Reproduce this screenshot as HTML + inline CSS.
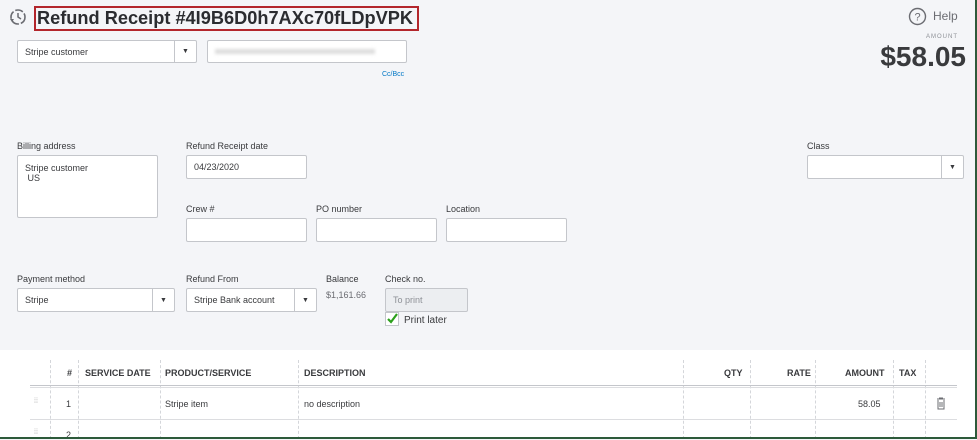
<!DOCTYPE html>
<html><head><meta charset="utf-8"><style>
*{box-sizing:border-box;margin:0;padding:0}
body{width:977px;height:439px;overflow:hidden;background:#f4f5f8;font-family:"Liberation Sans",sans-serif;color:#393a3d;position:relative}
.a{position:absolute}
.lbl{position:absolute;font-size:9px;color:#393a3d}
.box{position:absolute;background:#fff;border:1px solid #c4c6cb;border-radius:2px;font-size:9px;color:#393a3d;padding-left:7px;display:flex;align-items:center}
.dd{position:absolute;right:0;top:0;bottom:0;width:22px;border-left:1px solid #c4c6cb;display:flex;align-items:center;justify-content:center;font-size:7px}
.th{position:absolute;top:368px;font-size:9px;font-weight:bold;color:#393a3d}
.vl{position:absolute;top:360px;height:79px;border-left:1px dashed #d4d6da}
</style></head><body>
<svg class="a" style="left:8px;top:7px" width="20" height="20" viewBox="0 0 20 20"><circle cx="10" cy="10" r="7" fill="none" stroke="#6b6c72" stroke-width="1.6" stroke-dasharray="8 2"/><path d="M10 6v4l3 2" stroke="#6b6c72" stroke-width="1.5" fill="none"/><path d="M2 12l2 3 2-3" fill="#6b6c72"/></svg>
<div class="a" style="left:34px;top:6px;width:385px;height:25px;border:2px solid #b3262c;background:#f4f5f8"></div>
<div class="a" style="left:37px;top:7px;font-size:18.2px;font-weight:bold;color:#2b2c30;line-height:22px;white-space:nowrap">Refund Receipt #4I9B6D0h7AXc70fLDpVPK</div>
<svg class="a" style="left:908px;top:7px" width="19" height="19"><circle cx="9.5" cy="9.5" r="8" fill="none" stroke="#6b6c72" stroke-width="1.4"/><text x="9.5" y="13.5" text-anchor="middle" font-size="11" fill="#6b6c72" font-family="Liberation Sans">?</text></svg>
<div class="a" style="left:933px;top:9px;font-size:12px;color:#6b6c72">Help</div>
<div class="a" style="left:926px;top:34px;font-size:6px;color:#8d9096;letter-spacing:1px">AMOUNT</div>
<div class="a" style="right:11px;top:41px;font-size:28px;font-weight:bold;color:#393a3d">$58.05</div>
<div class="box" style="left:17px;top:40px;width:180px;height:23px">Stripe customer<div class="dd">▼</div></div>
<div class="box" style="left:207px;top:40px;width:200px;height:23px"><div style="width:160px;height:5px;background:#ddd;filter:blur(1.5px)"></div></div>
<div class="a" style="left:382px;top:71px;font-size:7px;color:#0077c5">Cc/Bcc</div>
<div class="lbl" style="left:17px;top:141px">Billing address</div>
<div class="box" style="left:17px;top:155px;width:141px;height:63px;align-items:flex-start;padding-top:7px;line-height:10px">Stripe customer<br>&nbsp;US</div>
<div class="lbl" style="left:186px;top:141px">Refund Receipt date</div>
<div class="box" style="left:186px;top:155px;width:121px;height:24px">04/23/2020</div>
<div class="lbl" style="left:186px;top:204px">Crew #</div>
<div class="box" style="left:186px;top:218px;width:121px;height:24px"></div>
<div class="lbl" style="left:316px;top:204px">PO number</div>
<div class="box" style="left:316px;top:218px;width:121px;height:24px"></div>
<div class="lbl" style="left:446px;top:204px">Location</div>
<div class="box" style="left:446px;top:218px;width:121px;height:24px"></div>
<div class="lbl" style="left:807px;top:141px">Class</div>
<div class="box" style="left:807px;top:155px;width:157px;height:24px"><div class="dd">▼</div></div>
<div class="lbl" style="left:17px;top:274px">Payment method</div>
<div class="box" style="left:17px;top:288px;width:158px;height:24px">Stripe<div class="dd">▼</div></div>
<div class="lbl" style="left:186px;top:274px">Refund From</div>
<div class="box" style="left:186px;top:288px;width:131px;height:24px">Stripe Bank account<div class="dd">▼</div></div>
<div class="lbl" style="left:326px;top:274px">Balance</div>
<div class="lbl" style="left:326px;top:290px;color:#6b6c72">$1,161.66</div>
<div class="lbl" style="left:385px;top:274px">Check no.</div>
<div class="box" style="left:385px;top:288px;width:83px;height:24px;background:#eceef1;color:#8d9096">To print</div>
<div class="a" style="left:385px;top:312px;width:14px;height:14px;background:#fff;border:1px solid #c4c6cb"></div>
<svg class="a" style="left:386px;top:312px" width="13" height="13"><path d="M2 7l3 3 6-8" stroke="#2ca01c" stroke-width="2.2" fill="none"/></svg>
<div class="lbl" style="left:404px;top:315px;font-size:10px">Print later</div>
<div class="a" style="left:0;top:350px;width:975px;height:89px;background:#fff"></div>
<div class="vl" style="left:50px"></div><div class="vl" style="left:78px"></div><div class="vl" style="left:160px"></div><div class="vl" style="left:298px"></div><div class="vl" style="left:683px"></div><div class="vl" style="left:750px"></div><div class="vl" style="left:815px"></div><div class="vl" style="left:893px"></div><div class="vl" style="left:925px"></div>
<div class="th" style="left:67px">#</div>
<div class="th" style="left:85px">SERVICE DATE</div>
<div class="th" style="left:165px">PRODUCT/SERVICE</div>
<div class="th" style="left:304px">DESCRIPTION</div>
<div class="th" style="left:724px">QTY</div>
<div class="th" style="left:787px">RATE</div>
<div class="th" style="left:845px">AMOUNT</div>
<div class="th" style="left:899px">TAX</div>
<div class="a" style="left:30px;top:385px;width:927px;height:3px;border-top:1px solid #c4c6cb;border-bottom:1px solid #dcdde0"></div>
<div class="a" style="left:30px;top:419px;width:927px;height:2px;border-top:1px solid #dcdde0"></div>
<div class="lbl" style="left:34px;top:398px;color:#aaa;font-size:7px">⁞⁞</div>
<div class="lbl" style="left:66px;top:399px">1</div>
<div class="lbl" style="left:165px;top:399px">Stripe item</div>
<div class="lbl" style="left:304px;top:399px">no description</div>
<div class="lbl" style="left:858px;top:399px">58.05</div>
<svg class="a" style="left:936px;top:397px" width="10" height="13"><path d="M1 2h8M3 1h4M2 3v9h6V3M4 5v5M6 5v5" stroke="#6b6c72" fill="none"/></svg>
<div class="lbl" style="left:34px;top:429px;color:#aaa;font-size:7px">⁞⁞</div>
<div class="lbl" style="left:66px;top:430px">2</div>
<div class="a" style="left:975px;top:0;width:2px;height:439px;background:#2d5a3a"></div>
<div class="a" style="left:0;top:437px;width:977px;height:2px;background:#2d5a3a"></div>
</body></html>
